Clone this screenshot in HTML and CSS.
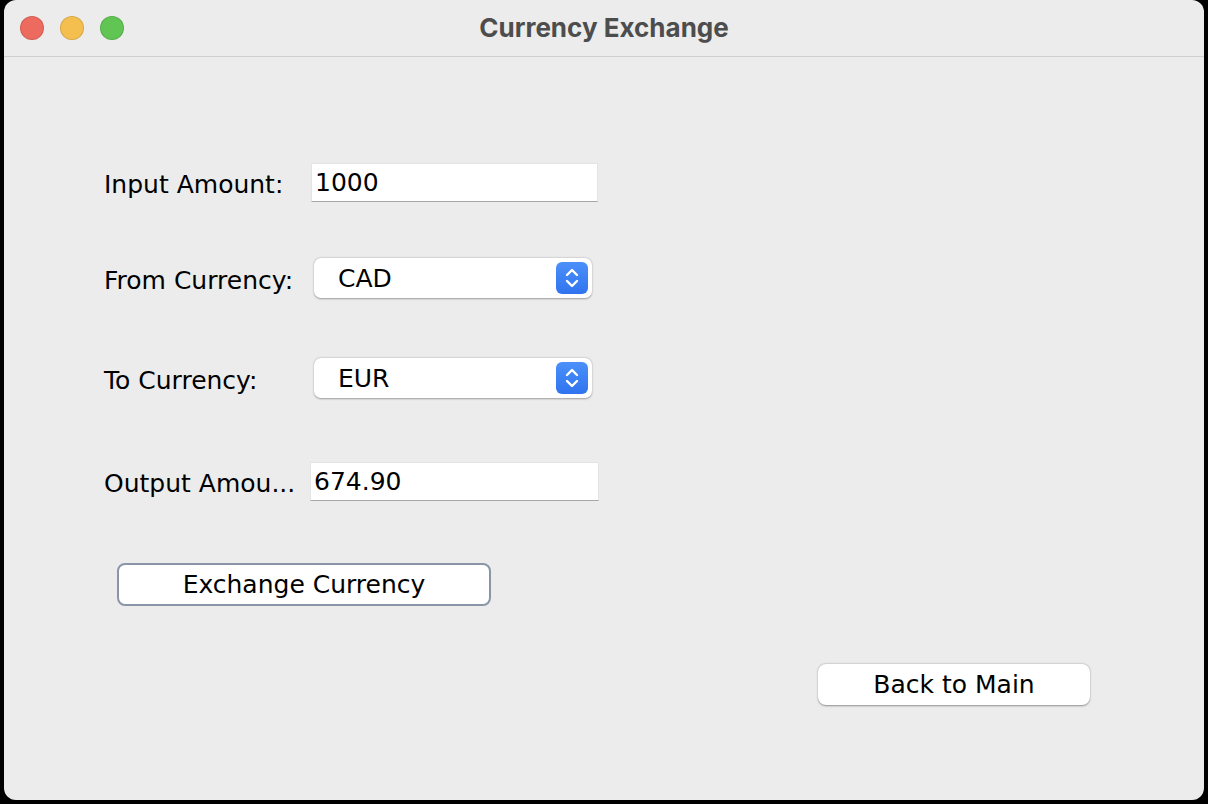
FILE: index.html
```html
<!DOCTYPE html>
<html>
<head>
<meta charset="utf-8">
<title>Currency Exchange</title>
<link rel="stylesheet" href="styles.css">
</head>
<body>
<div class="window">
  <div class="titlebar">
    <div class="lights">
      <span class="light red"></span>
      <span class="light yellow"></span>
      <span class="light green"></span>
    </div>
    <div class="title">Currency Exchange</div>
  </div>
  <div class="content">
    <div class="row r1">
      <div class="label">Input Amount:</div>
      <div class="field">1000</div>
    </div>
    <div class="row r2">
      <div class="label">From Currency:</div>
      <div class="combo"><span class="combo-text">CAD</span>
        <span class="stepper"><svg width="32" height="32" viewBox="0 0 32 32"><path d="M11 13 L16 8 L21 13 M11 19 L16 24 L21 19" fill="none" stroke="#fff" stroke-width="2.4" stroke-linecap="round" stroke-linejoin="round"/></svg></span>
      </div>
    </div>
    <div class="row r3">
      <div class="label">To Currency:</div>
      <div class="combo"><span class="combo-text">EUR</span>
        <span class="stepper"><svg width="32" height="32" viewBox="0 0 32 32"><path d="M11 13 L16 8 L21 13 M11 19 L16 24 L21 19" fill="none" stroke="#fff" stroke-width="2.4" stroke-linecap="round" stroke-linejoin="round"/></svg></span>
      </div>
    </div>
    <div class="row r4">
      <div class="label">Output Amou...</div>
      <div class="field wide">674.90</div>
    </div>
    <div class="btn-row">
      <button class="btn focus">Exchange Currency</button>
    </div>
    <div class="back-row">
      <button class="btn back">Back to Main</button>
    </div>
  </div>
</div>
</body>
</html>
```
FILE: styles.css
```css
html, body {
  margin: 0;
  padding: 0;
  background: #000;
  width: 1208px;
  height: 804px;
  overflow: hidden;
}
.window {
  margin-left: 4px;
  width: 1200px;
  height: 800px;
  background: #ececec;
  border-radius: 12px;
  overflow: hidden;
  display: flex;
  flex-direction: column;
  font-family: "DejaVu Sans", "Liberation Sans", sans-serif;
  color: #000;
}
.titlebar {
  position: relative;
  height: 56px;
  border-bottom: 1px solid #cfcfcf;
  display: flex;
  align-items: center;
  justify-content: center;
  flex-shrink: 0;
}
.lights {
  position: absolute;
  left: 16px;
  top: 16px;
  display: flex;
  gap: 16px;
}
.light {
  box-sizing: border-box;
  width: 24px;
  height: 24px;
  border-radius: 50%;
  border: 1px solid rgba(0,0,0,0.12);
}
.red { background: #ed6a5e; }
.yellow { background: #f5bf4f; }
.green { background: #61c554; }
.title {
  font-family: Inter, "Liberation Sans", sans-serif;
  font-weight: 700;
  font-size: 26px;
  color: #4d4d4d;
  margin-top: -2px;
}
.content {
  display: flex;
  flex-direction: column;
  padding-left: 100px;
}
.row {
  display: flex;
  align-items: center;
  height: 40px;
}
.r1 { margin-top: 105px; }
.r2 { margin-top: 56px; }
.r3 { margin-top: 60px; }
.r4 { margin-top: 63px; }
.label {
  width: 207px;
  font-size: 25px;
  padding-top: 4px;
}
.field {
  width: 282px;
  height: 37px;
  background: #fff;
  border: 1px solid #e4e4e4;
  border-bottom: 1px solid #a6a6a6;
  font-size: 25px;
  padding-left: 3px;
  display: flex;
  align-items: center;
  box-sizing: content-box;
}
.field.wide { width: 284px; margin-left: -1px; }
.combo {
  margin-left: 3px;
  width: 278px;
  height: 40px;
  box-sizing: border-box;
  background: #fff;
  border-radius: 7px;
  box-shadow: 0 0.5px 2px rgba(0,0,0,0.35);
  display: flex;
  align-items: center;
  justify-content: space-between;
  padding: 0 4px 0 24px;
  font-size: 25px;
}
.stepper {
  width: 32px;
  height: 32px;
  border-radius: 6px;
  background: linear-gradient(#4b90f9, #2f74ef);
  display: flex;
}
.btn-row {
  margin-top: 62px;
  padding-left: 13px;
  display: flex;
}
.btn {
  font-family: "DejaVu Sans", "Liberation Sans", sans-serif;
  font-size: 25px;
  color: #000;
  background: #fff;
  border-radius: 8px;
  cursor: default;
  padding: 0;
}
.btn.focus {
  width: 374px;
  height: 43px;
  border: 2px solid #8a96a8;
}
.back-row {
  margin-top: 58px;
  padding-left: 714px;
  display: flex;
}
.btn.back {
  width: 272px;
  height: 41px;
  border: none;
  box-shadow: 0 0.5px 2px rgba(0,0,0,0.4);
}
```
